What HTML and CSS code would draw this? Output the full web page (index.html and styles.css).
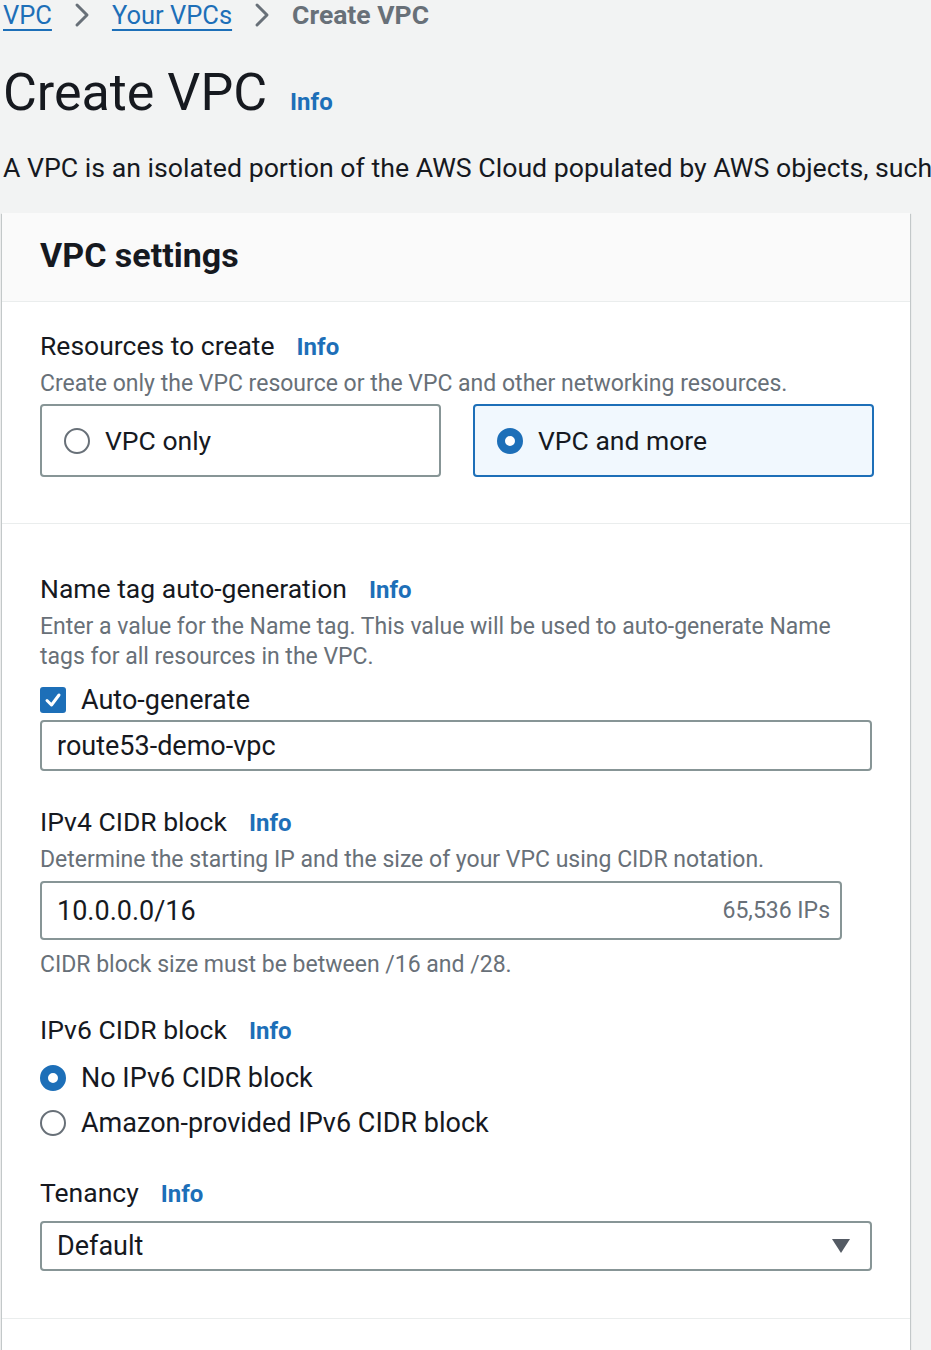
FILE: index.html
```html
<!DOCTYPE html>
<html lang="en">
<head>
<meta charset="utf-8">
<title>Create VPC</title>
<link rel="stylesheet" href="styles.css">
</head>
<body>
<div class="page">
  <nav class="breadcrumb">
    <a class="crumb-link" href="#">VPC</a>
    <svg class="chev" viewBox="0 0 16 26" width="16" height="26"><polyline points="3,3 13,13 3,23" fill="none" stroke="#687078" stroke-width="3" stroke-linecap="round" stroke-linejoin="round"/></svg>
    <a class="crumb-link" href="#">Your VPCs</a>
    <svg class="chev" viewBox="0 0 16 26" width="16" height="26"><polyline points="3,3 13,13 3,23" fill="none" stroke="#687078" stroke-width="3" stroke-linecap="round" stroke-linejoin="round"/></svg>
    <span class="crumb-current">Create VPC</span>
  </nav>

  <div class="title-row">
    <h1 class="title">Create VPC</h1>
    <a class="info info-title" href="#">Info</a>
  </div>
  <div class="page-desc-wrap">
    <p class="page-desc">A VPC is an isolated portion of the AWS Cloud populated by AWS objects, such as Amazon EC2 instances.</p>
  </div>

  <section class="panel">
    <header class="panel-header">
      <h2 class="panel-title">VPC settings</h2>
    </header>

    <div class="panel-section section-first">
      <div class="label-row"><span class="label">Resources to create</span><a class="info" href="#">Info</a></div>
      <p class="desc">Create only the VPC resource or the VPC and other networking resources.</p>
      <div class="tiles">
        <div class="tile">
          <span class="radio"></span>
          <span class="tile-text">VPC only</span>
        </div>
        <div class="tile tile-selected">
          <span class="radio radio-on"></span>
          <span class="tile-text">VPC and more</span>
        </div>
      </div>
    </div>

    <div class="panel-section section-second">
      <div class="label-row"><span class="label">Name tag auto-generation</span><a class="info" href="#">Info</a></div>
      <p class="desc">Enter a value for the Name tag. This value will be used to auto-generate Name tags for all resources in the VPC.</p>
      <div class="check-row">
        <span class="checkbox"><svg viewBox="0 0 26 26" width="26" height="26"><polyline points="7,13.5 11.5,18 19,8" fill="none" stroke="#ffffff" stroke-width="3" stroke-linecap="round" stroke-linejoin="round"/></svg></span>
        <span class="option-text">Auto-generate</span>
      </div>
      <div class="input input-name"><span class="input-value">route53-demo-vpc</span></div>

      <div class="label-row gap-field"><span class="label">IPv4 CIDR block</span><a class="info" href="#">Info</a></div>
      <p class="desc">Determine the starting IP and the size of your VPC using CIDR notation.</p>
      <div class="input input-cidr"><span class="input-value">10.0.0.0/16</span><span class="input-suffix">65,536 IPs</span></div>
      <p class="desc hint">CIDR block size must be between /16 and /28.</p>

      <div class="label-row gap-ipv6"><span class="label">IPv6 CIDR block</span><a class="info" href="#">Info</a></div>
      <div class="radio-row radio-row-first">
        <span class="radio radio-on"></span>
        <span class="option-text">No IPv6 CIDR block</span>
      </div>
      <div class="radio-row radio-row-second">
        <span class="radio"></span>
        <span class="option-text">Amazon-provided IPv6 CIDR block</span>
      </div>

      <div class="label-row gap-tenancy"><span class="label">Tenancy</span><a class="info" href="#">Info</a></div>
      <div class="input input-select">
        <span class="input-value">Default</span>
        <svg class="caret" viewBox="0 0 18 14" width="18" height="14"><polygon points="0,0 18,0 9,14" fill="#545b64"/></svg>
      </div>
    </div>

    <div class="panel-section section-third"></div>
  </section>
</div>
</body>
</html>
```

FILE: styles.css
```css
html, body {
  margin: 0;
  padding: 0;
}

body {
  background: #f2f3f3;
  font-family: Roboto, "Liberation Sans", Arial, sans-serif;
  color: #16191f;
  overflow: hidden;
}

.page {
  padding-left: 2px;
  width: 929px;
}

/* Breadcrumb */
.breadcrumb {
  display: flex;
  align-items: center;
  gap: 22px;
  height: 30px;
  font-size: 25.5px;
  line-height: 30px;
  padding-left: 1px;
}

.crumb-link {
  color: #1d6fb8;
  text-decoration: underline;
  text-decoration-thickness: 2px;
  text-underline-offset: 5px;
}

.chev {
  display: block;
}

.crumb-current {
  color: #687078;
  font-weight: 700;
  font-size: 26.5px;
}

/* Title */
.title-row {
  display: flex;
  align-items: baseline;
  gap: 23px;
  margin-top: 31px;
  padding-left: 1px;
  height: 64px;
}

.title {
  margin: 0;
  font-size: 52px;
  line-height: 64px;
  font-weight: 400;
  color: #16191f;
}

.info {
  color: #1d6fb8;
  font-weight: 700;
  text-decoration: none;
  font-size: 24px;
}

.info-title {
  font-size: 24px;
}

.page-desc-wrap {
  margin-top: 26px;
  width: 929px;
  overflow: hidden;
}

.page-desc {
  margin: 0 0 0 1px;
  font-size: 26.7px;
  line-height: 34px;
  white-space: nowrap;
  color: #16191f;
}

/* Panel */
.panel {
  margin-top: 28px;
  width: 908px;
  background: #ffffff;
  box-shadow: 0 1px 1px 0 rgba(0, 28, 36, 0.3), 1px 1px 1px 0 rgba(0, 28, 36, 0.15), -1px 1px 1px 0 rgba(0, 28, 36, 0.15);
}

.panel-header {
  background: #fafafa;
  border-bottom: 1px solid #eaeded;
  padding: 22px 38px 26px;
}

.panel-title {
  margin: 0;
  font-size: 34px;
  line-height: 40px;
  font-weight: 700;
  color: #16191f;
}

.panel-section {
  padding: 0 38px;
  border-bottom: 1px solid #eaeded;
}

.section-first {
  padding-top: 26px;
  padding-bottom: 46px;
}

.section-second {
  padding-top: 47px;
  padding-bottom: 47px;
}

.section-third {
  height: 60px;
  border-bottom: none;
}

.label-row {
  display: flex;
  align-items: baseline;
  gap: 22px;
  line-height: 36px;
  height: 36px;
}

.label {
  font-size: 26.5px;
  color: #16191f;
}

.desc {
  margin: 5px 0 0;
  font-size: 23px;
  line-height: 30px;
  color: #687078;
}

/* Tiles */
.tiles {
  display: grid;
  grid-template-columns: 401px 401px;
  column-gap: 32px;
  margin-top: 5px;
}

.tile {
  box-sizing: border-box;
  height: 73px;
  border: 2px solid #879596;
  border-radius: 4px;
  display: flex;
  align-items: center;
  gap: 15px;
  padding-left: 22px;
}

.tile-selected {
  border-color: #1d6fb8;
  background: #f1f8fe;
}

.tile-text {
  font-size: 26.5px;
  line-height: 36px;
}

.radio {
  box-sizing: border-box;
  width: 26px;
  height: 26px;
  border-radius: 50%;
  border: 2px solid #687078;
  background: #ffffff;
  flex: none;
}

.radio-on {
  border: 8px solid #1d6fb8;
}

/* Checkbox */
.check-row {
  display: flex;
  align-items: center;
  gap: 15px;
  margin-top: 10px;
  height: 36px;
}

.checkbox {
  width: 26px;
  height: 26px;
  border-radius: 3px;
  background: #1d6fb8;
  flex: none;
  display: block;
}

.checkbox svg {
  display: block;
}

.option-text {
  font-size: 27px;
  line-height: 36px;
}

/* Inputs */
.input {
  box-sizing: border-box;
  border: 2px solid #879596;
  border-radius: 4px;
  background: #ffffff;
  display: flex;
  align-items: center;
  padding: 0 10px 0 15px;
}

.input-value {
  font-size: 27px;
  color: #16191f;
  flex: 1;
}

.input-name {
  margin-top: 2px;
  height: 51px;
  width: 832px;
}

.gap-field {
  margin-top: 33px;
}

.input-cidr {
  margin-top: 6px;
  height: 59px;
  width: 802px;
}

.input-suffix {
  font-size: 23px;
  color: #687078;
}

.hint {
  margin-top: 10px;
}

.gap-ipv6 {
  margin-top: 32px;
}

.radio-row {
  display: flex;
  align-items: center;
  gap: 15px;
  height: 36px;
}

.radio-row-first {
  margin-top: 12px;
}

.radio-row-second {
  margin-top: 9px;
}

.gap-tenancy {
  margin-top: 34px;
}

.input-select {
  margin-top: 10px;
  height: 50px;
  width: 832px;
  padding-right: 20px;
}

.caret {
  display: block;
  flex: none;
}
```
